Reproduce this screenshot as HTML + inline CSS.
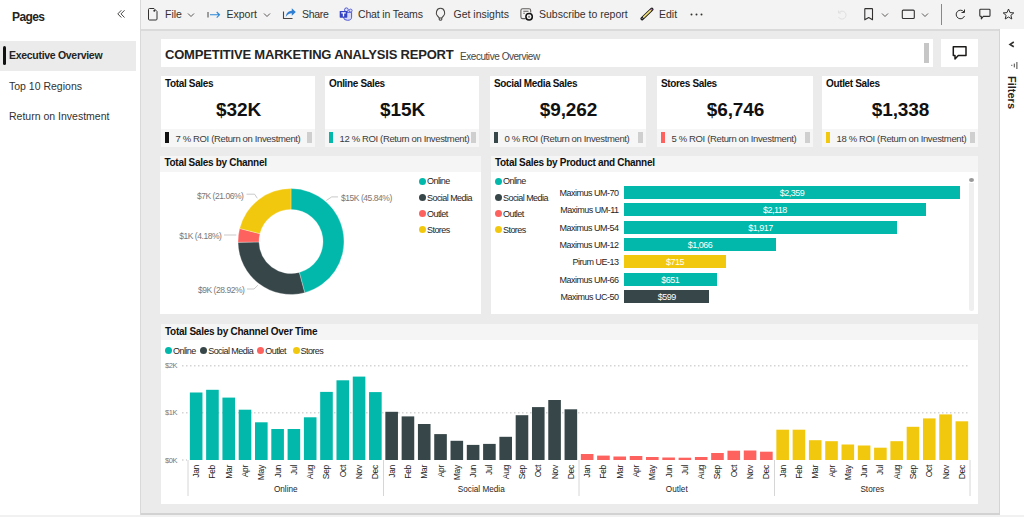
<!DOCTYPE html>
<html><head><meta charset="utf-8">
<style>
*{margin:0;padding:0;box-sizing:border-box}
html,body{width:1024px;height:517px;overflow:hidden;background:#fff;font-family:"Liberation Sans",sans-serif;color:#252423}
.a{position:absolute}
.t{white-space:nowrap;position:absolute;line-height:1}
svg{position:absolute;overflow:visible}
</style></head><body>

<div class="a" style="left:140px;top:0px;width:1px;height:517px;background:#d9d9d9;"></div>
<div class="t" style="left:12.00px;top:11.14px;font-size:12px;font-weight:bold;color:#252423;letter-spacing:-0.6px;">Pages</div>
<svg style="left:0;top:0" width="140" height="40"><path d="M121.3,10.3 L117.8,13.9 L121.3,17.5 M124.5,10.3 L121,13.9 L124.5,17.5" fill="none" stroke="#484644" stroke-width="1"/></svg>
<div class="a" style="left:0px;top:41px;width:136px;height:30px;background:#ebebeb;"></div>
<div class="a" style="left:3px;top:46px;width:3px;height:19px;background:#111;border-radius:1.5px"></div>
<div class="t" style="left:9.00px;top:50.01px;font-size:10.5px;font-weight:bold;color:#252423;letter-spacing:-0.3px;">Executive Overview</div>
<div class="t" style="left:9.00px;top:80.71px;font-size:10.5px;font-weight:normal;color:#323130;">Top 10 Regions</div>
<div class="t" style="left:9.00px;top:110.81px;font-size:10.5px;font-weight:normal;color:#323130;">Return on Investment</div>
<div class="a" style="left:141px;top:0px;width:883px;height:29px;background:#f3f3f3;"></div>
<div class="a" style="left:141px;top:29px;width:859px;height:2px;background:#dadada;"></div>
<svg style="left:0;top:0" width="1024" height="30"><path d="M149.5,8.5 H154 L157,11.5 V19 Q157,20 156,20 H149.5 Q148.5,20 148.5,19 V9.5 Q148.5,8.5 149.5,8.5 Z" fill="none" stroke="#323130" stroke-width="1"/><circle cx="154.3" cy="10.8" r="1" fill="#323130"/><path d="M188,13.5 L191,16.5 L194,13.5" fill="none" stroke="#484644" stroke-width="0.9"/><path d="M264,13.5 L267,16.5 L270,13.5" fill="none" stroke="#484644" stroke-width="0.9"/><path d="M208,12 V17.5" stroke="#484644" stroke-width="1"/><path d="M210,14.8 H219.5 M216.7,12 L219.5,14.8 L216.7,17.6" fill="none" stroke="#2b88d8" stroke-width="1.1"/><path d="M283.5,11.5 V18.5 H292.5" fill="none" stroke="#484644" stroke-width="1.1"/><path d="M285.8,17 C286,13.2 288.6,11 291.8,10.8 V8.3 L295.8,12 L291.8,15.7 V13.3 C289.3,13.3 287.3,14.6 285.8,17 Z" fill="#2f7fd4"/><circle cx="350.6" cy="10.6" r="1.5" fill="#dfe1fa" stroke="#5a63d6" stroke-width="1"/><path d="M343.5,12.3 H351.6 V17.2 Q351.6,20.3 347.5,20.3 Q343.5,20.3 343.5,17.2 Z" fill="#d6d8f7" stroke="#4f59d3" stroke-width="1"/><circle cx="346.4" cy="9.8" r="1.9" fill="#dfe1fa" stroke="#4f59d3" stroke-width="1"/><rect x="339.7" y="10.9" width="7.6" height="6.8" rx="0.6" fill="#3443c4"/><path d="M341.3,12.9 H345.7 M343.5,12.9 V16.4" stroke="#fff" stroke-width="1.3"/><path d="M437.3,15.6 C435.6,14 436,8.3 440.5,8.3 C445,8.3 445.4,14 443.7,15.6 L441.8,17.8 V19.4 Q441.6,20.2 440.5,20.2 Q439.4,20.2 439.2,19.4 V17.8 Z M439.3,18 H441.7" fill="none" stroke="#484644" stroke-width="1.1" stroke-linejoin="round"/><path d="M525.5,18.6 H522.6 Q520.9,18.6 520.9,16.9 V10.4 Q520.9,8.7 522.6,8.7 H529 Q530.7,8.7 530.7,10.4 V12.5 M523.3,11.3 H528.5 M523.3,13.3 H524.8" fill="none" stroke="#605e5c" stroke-width="1.1"/><circle cx="529.1" cy="16.8" r="3.2" fill="#f3f3f3" stroke="#111" stroke-width="1.5"/><circle cx="529.1" cy="16.8" r="1.1" fill="#888"/><path d="M642,18.7 L651.9,9.3" stroke="#1f1f1f" stroke-width="3.3" stroke-linecap="round"/><path d="M643.6,17.1 L650.4,10.6" stroke="#f7e57a" stroke-width="1.5" stroke-linecap="round"/><circle cx="651.5" cy="9.7" r="0.9" fill="#c86dd7"/><circle cx="642.2" cy="18.5" r="0.6" fill="#aaa"/><circle cx="691.5" cy="14.5" r="1" fill="#323130"/><circle cx="696.5" cy="14.5" r="1" fill="#323130"/><circle cx="701.5" cy="14.5" r="1" fill="#323130"/><path d="M839,12.5 A4,4 0 1 1 838.5,17 M838.5,10.5 V13 H841" fill="none" stroke="#e0e0e0" stroke-width="1"/><path d="M865.3,8.6 H872 Q872.5,8.6 872.5,9.1 V19.8 L868.7,17.6 L864.8,19.8 V9.1 Q864.8,8.6 865.3,8.6 Z" fill="none" stroke="#323130" stroke-width="1.1" stroke-linejoin="round"/><path d="M882,13.5 L885,16.5 L888,13.5" fill="none" stroke="#484644" stroke-width="0.9"/><rect x="902.3" y="10.1" width="12" height="8.4" rx="1" fill="none" stroke="#323130" stroke-width="1.1"/><path d="M922,13.5 L925,16.5 L928,13.5" fill="none" stroke="#484644" stroke-width="0.9"/><path d="M941.5,4 V25" stroke="#8a8886" stroke-width="1"/><path d="M964,12 A4.3,4.3 0 1 0 964.5,16 M964.5,9.5 V12.5 H961.5" fill="none" stroke="#323130" stroke-width="1"/><path d="M980.6,9.3 H989.2 Q990,9.3 990,10.1 V15.6 Q990,16.4 989.2,16.4 H983.3 L981.3,18.8 V16.4 H980.6 Q979.8,16.4 979.8,15.6 V10.1 Q979.8,9.3 980.6,9.3 Z" fill="none" stroke="#323130" stroke-width="1.1" stroke-linejoin="round"/><path d="M1008.5,9 L1010,12.6 L1013.8,12.9 L1010.9,15.3 L1011.8,19 L1008.5,17 L1005.2,19 L1006.1,15.3 L1003.2,12.9 L1007,12.6 Z" fill="none" stroke="#323130" stroke-width="1" stroke-linejoin="round"/></svg>
<div class="t" style="left:165.00px;top:9.11px;font-size:10.5px;font-weight:normal;color:#323130;">File</div>
<div class="t" style="left:226.50px;top:9.11px;font-size:10.5px;font-weight:normal;color:#323130;">Export</div>
<div class="t" style="left:302.00px;top:9.11px;font-size:10.5px;font-weight:normal;color:#323130;letter-spacing:-0.3px;">Share</div>
<div class="t" style="left:358.00px;top:9.31px;font-size:10.5px;font-weight:normal;color:#323130;letter-spacing:-0.17px;">Chat in Teams</div>
<div class="t" style="left:453.50px;top:9.11px;font-size:10.5px;font-weight:normal;color:#323130;">Get insights</div>
<div class="t" style="left:539.00px;top:9.11px;font-size:10.5px;font-weight:normal;color:#323130;">Subscribe to report</div>
<div class="t" style="left:659.00px;top:9.11px;font-size:10.5px;font-weight:normal;color:#323130;">Edit</div>
<div class="a" style="left:141px;top:31px;width:858px;height:483px;background:#ebebeb;"></div>
<div class="a" style="left:999px;top:29px;width:1px;height:486px;background:#d4d4d4;"></div>
<div class="a" style="left:0px;top:515px;width:1024px;height:2px;background:#f1f1f1;"></div>
<div class="a" style="left:141px;top:513px;width:859px;height:2px;background:#d2d2d2;"></div>
<div class="a" style="left:161px;top:39px;width:772px;height:28px;background:#fff;"></div>
<div class="t" style="left:165.00px;top:48.40px;font-size:13px;font-weight:bold;color:#252423;letter-spacing:-0.2px;">COMPETITIVE MARKETING ANALYSIS REPORT</div>
<div class="t" style="left:460.00px;top:51.53px;font-size:10px;font-weight:normal;color:#484644;letter-spacing:-0.45px;">Executive Overview</div>
<div class="a" style="left:924px;top:43px;width:5px;height:20px;background:#c6c6c6;"></div>
<div class="a" style="left:941px;top:39px;width:37px;height:28px;background:#fff;"></div>
<svg style="left:0;top:0" width="1024" height="80"><path d="M953.3,46.8 H966 V55.4 H958.3 L955,59 L955,55.4 H953.3 Z" fill="none" stroke="#1b1a19" stroke-width="1.5" stroke-linejoin="round"/></svg>
<div class="a" style="left:161px;top:76px;width:154px;height:71px;background:#fff;"></div>
<div class="a" style="left:161px;top:129px;width:154px;height:18px;background:#f6f6f6;"></div>
<div class="t" style="left:165.00px;top:78.53px;font-size:10px;font-weight:bold;color:#111;letter-spacing:-0.35px;">Total Sales</div>
<div class="t" style="left:138.50px;top:99.72px;width:200px;text-align:center;font-size:19px;font-weight:bold;color:#111;letter-spacing:-0.1px;">$32K</div>
<div class="a" style="left:165px;top:132px;width:4px;height:11px;background:#111;"></div>
<div class="a" style="left:307px;top:132px;width:5px;height:11px;background:#cfcfcf;"></div>
<div class="t" style="left:175.50px;top:133.66px;font-size:9.5px;font-weight:normal;color:#3b3b3b;letter-spacing:-0.36px;">7 % ROI (Return on Investment)</div>
<div class="a" style="left:325px;top:76px;width:154px;height:71px;background:#fff;"></div>
<div class="a" style="left:325px;top:129px;width:154px;height:18px;background:#f6f6f6;"></div>
<div class="t" style="left:329.00px;top:78.53px;font-size:10px;font-weight:bold;color:#111;letter-spacing:-0.35px;">Online Sales</div>
<div class="t" style="left:302.50px;top:99.72px;width:200px;text-align:center;font-size:19px;font-weight:bold;color:#111;letter-spacing:-0.1px;">$15K</div>
<div class="a" style="left:329px;top:132px;width:4px;height:11px;background:#01b8aa;"></div>
<div class="a" style="left:471px;top:132px;width:5px;height:11px;background:#cfcfcf;"></div>
<div class="t" style="left:339.50px;top:133.66px;font-size:9.5px;font-weight:normal;color:#3b3b3b;letter-spacing:-0.36px;">12 % ROI (Return on Investment)</div>
<div class="a" style="left:490px;top:76px;width:156px;height:71px;background:#fff;"></div>
<div class="a" style="left:490px;top:129px;width:156px;height:18px;background:#f6f6f6;"></div>
<div class="t" style="left:494.00px;top:78.53px;font-size:10px;font-weight:bold;color:#111;letter-spacing:-0.35px;">Social Media Sales</div>
<div class="t" style="left:468.50px;top:99.72px;width:200px;text-align:center;font-size:19px;font-weight:bold;color:#111;letter-spacing:-0.1px;">$9,262</div>
<div class="a" style="left:494px;top:132px;width:4px;height:11px;background:#374649;"></div>
<div class="a" style="left:638px;top:132px;width:5px;height:11px;background:#cfcfcf;"></div>
<div class="t" style="left:504.50px;top:133.66px;font-size:9.5px;font-weight:normal;color:#3b3b3b;letter-spacing:-0.36px;">0 % ROI (Return on Investment)</div>
<div class="a" style="left:657px;top:76px;width:156px;height:71px;background:#fff;"></div>
<div class="a" style="left:657px;top:129px;width:156px;height:18px;background:#f6f6f6;"></div>
<div class="t" style="left:661.00px;top:78.53px;font-size:10px;font-weight:bold;color:#111;letter-spacing:-0.35px;">Stores Sales</div>
<div class="t" style="left:635.50px;top:99.72px;width:200px;text-align:center;font-size:19px;font-weight:bold;color:#111;letter-spacing:-0.1px;">$6,746</div>
<div class="a" style="left:661px;top:132px;width:4px;height:11px;background:#fd625e;"></div>
<div class="a" style="left:805px;top:132px;width:5px;height:11px;background:#cfcfcf;"></div>
<div class="t" style="left:671.50px;top:133.66px;font-size:9.5px;font-weight:normal;color:#3b3b3b;letter-spacing:-0.36px;">5 % ROI (Return on Investment)</div>
<div class="a" style="left:822px;top:76px;width:156px;height:71px;background:#fff;"></div>
<div class="a" style="left:822px;top:129px;width:156px;height:18px;background:#f6f6f6;"></div>
<div class="t" style="left:826.00px;top:78.53px;font-size:10px;font-weight:bold;color:#111;letter-spacing:-0.35px;">Outlet Sales</div>
<div class="t" style="left:800.50px;top:99.72px;width:200px;text-align:center;font-size:19px;font-weight:bold;color:#111;letter-spacing:-0.1px;">$1,338</div>
<div class="a" style="left:826px;top:132px;width:4px;height:11px;background:#f2c80f;"></div>
<div class="a" style="left:970px;top:132px;width:5px;height:11px;background:#cfcfcf;"></div>
<div class="t" style="left:836.50px;top:133.66px;font-size:9.5px;font-weight:normal;color:#3b3b3b;letter-spacing:-0.36px;">18 % ROI (Return on Investment)</div>
<div class="a" style="left:160px;top:156px;width:321px;height:158px;background:#fff;"></div>
<div class="a" style="left:160px;top:156px;width:321px;height:16px;background:#f5f5f5;"></div>
<div class="t" style="left:164.50px;top:158.34px;font-size:10px;font-weight:bold;color:#111;letter-spacing:-0.3px;">Total Sales by Channel</div>
<svg style="left:0;top:0" width="1024" height="517"><path d="M291.00,188.50 A53,53 0 0 1 304.70,292.70 L299.27,272.41 A32,32 0 0 0 291.00,209.50 Z" fill="#01b8aa" stroke="#fff" stroke-width="0.3"/><path d="M304.70,292.70 A53,53 0 0 1 238.01,242.30 L259.00,241.98 A32,32 0 0 0 299.27,272.41 Z" fill="#374649" stroke="#fff" stroke-width="0.3"/><path d="M238.01,242.30 A53,53 0 0 1 239.62,228.51 L259.98,233.66 A32,32 0 0 0 259.00,241.98 Z" fill="#fd625e" stroke="#fff" stroke-width="0.3"/><path d="M239.62,228.51 A53,53 0 0 1 291.00,188.50 L291.00,209.50 A32,32 0 0 0 259.98,233.66 Z" fill="#f2c80f" stroke="#fff" stroke-width="0.3"/><path d="M326.3,200.5 L331.7,196.9 H338" fill="none" stroke="#bbb" stroke-width="0.8"/><path d="M246.5,194.2 H254.6 L257.3,198.3" fill="none" stroke="#bbb" stroke-width="0.8"/><path d="M224,235 H236.3" fill="none" stroke="#bbb" stroke-width="0.8"/><path d="M247,289 H254 L257.9,285.2" fill="none" stroke="#bbb" stroke-width="0.8"/></svg>
<div class="t" style="left:341.00px;top:194.00px;font-size:8.5px;font-weight:normal;color:#777;letter-spacing:-0.45px;">$15K (45.84%)</div>
<div class="t" style="left:43.50px;top:191.50px;width:200px;text-align:right;font-size:8.5px;font-weight:normal;color:#777;letter-spacing:-0.45px;">$7K (21.06%)</div>
<div class="t" style="left:21.50px;top:231.70px;width:200px;text-align:right;font-size:8.5px;font-weight:normal;color:#777;letter-spacing:-0.45px;">$1K (4.18%)</div>
<div class="t" style="left:44.50px;top:285.50px;width:200px;text-align:right;font-size:8.5px;font-weight:normal;color:#777;letter-spacing:-0.45px;">$9K (28.92%)</div>
<div class="a" style="left:418.5px;top:177.5px;width:7px;height:7px;border-radius:50%;background:#01b8aa"></div>
<div class="t" style="left:427.00px;top:177.38px;font-size:9px;font-weight:normal;color:#252525;letter-spacing:-0.55px;">Online</div>
<div class="a" style="left:418.5px;top:193.7px;width:7px;height:7px;border-radius:50%;background:#374649"></div>
<div class="t" style="left:427.00px;top:193.58px;font-size:9px;font-weight:normal;color:#252525;letter-spacing:-0.55px;">Social Media</div>
<div class="a" style="left:418.5px;top:209.9px;width:7px;height:7px;border-radius:50%;background:#fd625e"></div>
<div class="t" style="left:427.00px;top:209.78px;font-size:9px;font-weight:normal;color:#252525;letter-spacing:-0.55px;">Outlet</div>
<div class="a" style="left:418.5px;top:226.1px;width:7px;height:7px;border-radius:50%;background:#f2c80f"></div>
<div class="t" style="left:427.00px;top:225.98px;font-size:9px;font-weight:normal;color:#252525;letter-spacing:-0.55px;">Stores</div>
<div class="a" style="left:491px;top:156px;width:487px;height:158px;background:#fff;"></div>
<div class="a" style="left:491px;top:156px;width:487px;height:16px;background:#f5f5f5;"></div>
<div class="t" style="left:495.00px;top:158.44px;font-size:10px;font-weight:bold;color:#111;letter-spacing:-0.3px;">Total Sales by Product and Channel</div>
<div class="a" style="left:495px;top:177.5px;width:7px;height:7px;border-radius:50%;background:#01b8aa"></div>
<div class="t" style="left:503.00px;top:177.38px;font-size:9px;font-weight:normal;color:#252525;letter-spacing:-0.55px;">Online</div>
<div class="a" style="left:495px;top:193.7px;width:7px;height:7px;border-radius:50%;background:#374649"></div>
<div class="t" style="left:503.00px;top:193.58px;font-size:9px;font-weight:normal;color:#252525;letter-spacing:-0.55px;">Social Media</div>
<div class="a" style="left:495px;top:209.9px;width:7px;height:7px;border-radius:50%;background:#fd625e"></div>
<div class="t" style="left:503.00px;top:209.78px;font-size:9px;font-weight:normal;color:#252525;letter-spacing:-0.55px;">Outlet</div>
<div class="a" style="left:495px;top:226.1px;width:7px;height:7px;border-radius:50%;background:#f2c80f"></div>
<div class="t" style="left:503.00px;top:225.98px;font-size:9px;font-weight:normal;color:#252525;letter-spacing:-0.55px;">Stores</div>
<div class="a" style="left:624px;top:186.0px;width:336.0px;height:13px;background:#01b8aa;"></div>
<div class="t" style="left:418.50px;top:189.08px;width:200px;text-align:right;font-size:9px;font-weight:normal;color:#252525;letter-spacing:-0.5px;">Maximus UM-70</div>
<div class="t" style="left:692.00px;top:189.08px;width:200px;text-align:center;font-size:9px;font-weight:normal;color:#fff;letter-spacing:-0.5px;">$2,359</div>
<div class="a" style="left:624px;top:203.3px;width:301.7px;height:13px;background:#01b8aa;"></div>
<div class="t" style="left:418.50px;top:206.38px;width:200px;text-align:right;font-size:9px;font-weight:normal;color:#252525;letter-spacing:-0.5px;">Maximus UM-11</div>
<div class="t" style="left:674.84px;top:206.38px;width:200px;text-align:center;font-size:9px;font-weight:normal;color:#fff;letter-spacing:-0.5px;">$2,118</div>
<div class="a" style="left:624px;top:220.6px;width:273.0px;height:13px;background:#01b8aa;"></div>
<div class="t" style="left:418.50px;top:223.68px;width:200px;text-align:right;font-size:9px;font-weight:normal;color:#252525;letter-spacing:-0.5px;">Maximus UM-54</div>
<div class="t" style="left:660.52px;top:223.68px;width:200px;text-align:center;font-size:9px;font-weight:normal;color:#fff;letter-spacing:-0.5px;">$1,917</div>
<div class="a" style="left:624px;top:237.9px;width:151.8px;height:13px;background:#01b8aa;"></div>
<div class="t" style="left:418.50px;top:240.98px;width:200px;text-align:right;font-size:9px;font-weight:normal;color:#252525;letter-spacing:-0.5px;">Maximus UM-12</div>
<div class="t" style="left:599.92px;top:240.98px;width:200px;text-align:center;font-size:9px;font-weight:normal;color:#fff;letter-spacing:-0.5px;">$1,066</div>
<div class="a" style="left:624px;top:255.2px;width:101.8px;height:13px;background:#f2c80f;"></div>
<div class="t" style="left:418.50px;top:258.28px;width:200px;text-align:right;font-size:9px;font-weight:normal;color:#252525;letter-spacing:-0.5px;">Pirum UE-13</div>
<div class="t" style="left:574.92px;top:258.28px;width:200px;text-align:center;font-size:9px;font-weight:normal;color:#fff;letter-spacing:-0.5px;">$715</div>
<div class="a" style="left:624px;top:272.5px;width:92.7px;height:13px;background:#01b8aa;"></div>
<div class="t" style="left:418.50px;top:275.58px;width:200px;text-align:right;font-size:9px;font-weight:normal;color:#252525;letter-spacing:-0.5px;">Maximus UM-66</div>
<div class="t" style="left:570.36px;top:275.58px;width:200px;text-align:center;font-size:9px;font-weight:normal;color:#fff;letter-spacing:-0.5px;">$651</div>
<div class="a" style="left:624px;top:289.8px;width:85.3px;height:13px;background:#374649;"></div>
<div class="t" style="left:418.50px;top:292.88px;width:200px;text-align:right;font-size:9px;font-weight:normal;color:#252525;letter-spacing:-0.5px;">Maximus UC-50</div>
<div class="t" style="left:566.66px;top:292.88px;width:200px;text-align:center;font-size:9px;font-weight:normal;color:#fff;letter-spacing:-0.5px;">$599</div>
<div class="a" style="left:969px;top:183px;width:5px;height:127.5px;background:#efefef;border-radius:0 0 2.5px 2.5px"></div>
<div class="a" style="left:969.2px;top:178.3px;width:5px;height:4px;border-radius:50%;background:#999"></div>
<div class="a" style="left:161px;top:324px;width:817px;height:180px;background:#fff;"></div>
<div class="a" style="left:161px;top:324px;width:817px;height:16px;background:#f5f5f5;"></div>
<div class="t" style="left:165.00px;top:326.84px;font-size:10px;font-weight:bold;color:#111;letter-spacing:-0.25px;">Total Sales by Channel Over Time</div>
<div class="a" style="left:165px;top:347.3px;width:7px;height:7px;border-radius:50%;background:#01b8aa"></div>
<div class="t" style="left:173.00px;top:347.08px;font-size:9px;font-weight:normal;color:#252525;letter-spacing:-0.55px;">Online</div>
<div class="a" style="left:200.2px;top:347.3px;width:7px;height:7px;border-radius:50%;background:#374649"></div>
<div class="t" style="left:208.20px;top:347.08px;font-size:9px;font-weight:normal;color:#252525;letter-spacing:-0.55px;">Social Media</div>
<div class="a" style="left:257.3px;top:347.3px;width:7px;height:7px;border-radius:50%;background:#fd625e"></div>
<div class="t" style="left:265.30px;top:347.08px;font-size:9px;font-weight:normal;color:#252525;letter-spacing:-0.55px;">Outlet</div>
<div class="a" style="left:292.5px;top:347.3px;width:7px;height:7px;border-radius:50%;background:#f2c80f"></div>
<div class="t" style="left:300.50px;top:347.08px;font-size:9px;font-weight:normal;color:#252525;letter-spacing:-0.55px;">Stores</div>
<div class="t" style="left:165.00px;top:362.05px;font-size:7.5px;font-weight:normal;color:#777;letter-spacing:-0.4px;">$2K</div>
<div class="t" style="left:165.00px;top:409.35px;font-size:7.5px;font-weight:normal;color:#777;letter-spacing:-0.4px;">$1K</div>
<div class="t" style="left:165.00px;top:456.85px;font-size:7.5px;font-weight:normal;color:#777;letter-spacing:-0.4px;">$0K</div>
<svg style="left:0;top:0" width="1024" height="517"><path d="M182,365.8 H970" stroke="#d4d4d4" stroke-width="1.5" stroke-dasharray="1.5,2.5"/><path d="M182,412.8 H970" stroke="#d4d4d4" stroke-width="1.5" stroke-dasharray="1.5,2.5"/><path d="M182,460 H187" stroke="#d4d4d4" stroke-width="1.5" stroke-dasharray="1.5,2.5"/><rect x="189.85" y="392.50" width="12.6" height="67.50" fill="#01b8aa"/><rect x="206.14" y="389.80" width="12.6" height="70.20" fill="#01b8aa"/><rect x="222.43" y="397.60" width="12.6" height="62.40" fill="#01b8aa"/><rect x="238.72" y="409.70" width="12.6" height="50.30" fill="#01b8aa"/><rect x="255.02" y="422.30" width="12.6" height="37.70" fill="#01b8aa"/><rect x="271.31" y="429.00" width="12.6" height="31.00" fill="#01b8aa"/><rect x="287.60" y="429.00" width="12.6" height="31.00" fill="#01b8aa"/><rect x="303.89" y="417.30" width="12.6" height="42.70" fill="#01b8aa"/><rect x="320.18" y="391.90" width="12.6" height="68.10" fill="#01b8aa"/><rect x="336.48" y="380.30" width="12.6" height="79.70" fill="#01b8aa"/><rect x="352.77" y="376.60" width="12.6" height="83.40" fill="#01b8aa"/><rect x="369.06" y="392.10" width="12.6" height="67.90" fill="#01b8aa"/><rect x="385.35" y="411.80" width="12.6" height="48.20" fill="#374649"/><rect x="401.64" y="416.40" width="12.6" height="43.60" fill="#374649"/><rect x="417.93" y="424.00" width="12.6" height="36.00" fill="#374649"/><rect x="434.23" y="434.10" width="12.6" height="25.90" fill="#374649"/><rect x="450.52" y="440.80" width="12.6" height="19.20" fill="#374649"/><rect x="466.81" y="444.90" width="12.6" height="15.10" fill="#374649"/><rect x="483.10" y="443.90" width="12.6" height="16.10" fill="#374649"/><rect x="499.39" y="436.80" width="12.6" height="23.20" fill="#374649"/><rect x="515.68" y="415.20" width="12.6" height="44.80" fill="#374649"/><rect x="531.98" y="407.10" width="12.6" height="52.90" fill="#374649"/><rect x="548.27" y="400.00" width="12.6" height="60.00" fill="#374649"/><rect x="564.56" y="409.30" width="12.6" height="50.70" fill="#374649"/><rect x="580.85" y="454.00" width="12.6" height="6.00" fill="#fd625e"/><rect x="597.14" y="455.60" width="12.6" height="4.40" fill="#fd625e"/><rect x="613.43" y="456.50" width="12.6" height="3.50" fill="#fd625e"/><rect x="629.73" y="456.00" width="12.6" height="4.00" fill="#fd625e"/><rect x="646.02" y="457.00" width="12.6" height="3.00" fill="#fd625e"/><rect x="662.31" y="457.50" width="12.6" height="2.50" fill="#fd625e"/><rect x="678.60" y="457.70" width="12.6" height="2.30" fill="#fd625e"/><rect x="694.89" y="457.00" width="12.6" height="3.00" fill="#fd625e"/><rect x="711.18" y="453.00" width="12.6" height="7.00" fill="#fd625e"/><rect x="727.48" y="450.70" width="12.6" height="9.30" fill="#fd625e"/><rect x="743.77" y="450.50" width="12.6" height="9.50" fill="#fd625e"/><rect x="760.06" y="451.70" width="12.6" height="8.30" fill="#fd625e"/><rect x="776.35" y="429.70" width="12.6" height="30.30" fill="#f2c80f"/><rect x="792.64" y="429.70" width="12.6" height="30.30" fill="#f2c80f"/><rect x="808.93" y="440.20" width="12.6" height="19.80" fill="#f2c80f"/><rect x="825.23" y="441.20" width="12.6" height="18.80" fill="#f2c80f"/><rect x="841.52" y="444.50" width="12.6" height="15.50" fill="#f2c80f"/><rect x="857.81" y="445.50" width="12.6" height="14.50" fill="#f2c80f"/><rect x="874.10" y="447.70" width="12.6" height="12.30" fill="#f2c80f"/><rect x="890.39" y="441.20" width="12.6" height="18.80" fill="#f2c80f"/><rect x="906.68" y="426.80" width="12.6" height="33.20" fill="#f2c80f"/><rect x="922.98" y="418.40" width="12.6" height="41.60" fill="#f2c80f"/><rect x="939.27" y="414.40" width="12.6" height="45.60" fill="#f2c80f"/><rect x="955.56" y="421.30" width="12.6" height="38.70" fill="#f2c80f"/><path d="M188.00,460 V496" stroke="#d6d6d6" stroke-width="1"/><path d="M383.50,460 V496" stroke="#d6d6d6" stroke-width="1"/><path d="M579.00,460 V496" stroke="#d6d6d6" stroke-width="1"/><path d="M774.50,460 V496" stroke="#d6d6d6" stroke-width="1"/><path d="M970.00,460 V496" stroke="#d6d6d6" stroke-width="1"/></svg>
<div class="t" style="left:166.15px;top:465.00px;width:30px;height:8px;font-size:8.5px;letter-spacing:-0.3px;color:#252525;text-align:right;transform-origin:100% 0;transform:rotate(-90deg) translate(0,-4px)">Jan</div>
<div class="t" style="left:182.44px;top:465.00px;width:30px;height:8px;font-size:8.5px;letter-spacing:-0.3px;color:#252525;text-align:right;transform-origin:100% 0;transform:rotate(-90deg) translate(0,-4px)">Feb</div>
<div class="t" style="left:198.73px;top:465.00px;width:30px;height:8px;font-size:8.5px;letter-spacing:-0.3px;color:#252525;text-align:right;transform-origin:100% 0;transform:rotate(-90deg) translate(0,-4px)">Mar</div>
<div class="t" style="left:215.02px;top:465.00px;width:30px;height:8px;font-size:8.5px;letter-spacing:-0.3px;color:#252525;text-align:right;transform-origin:100% 0;transform:rotate(-90deg) translate(0,-4px)">Apr</div>
<div class="t" style="left:231.31px;top:465.00px;width:30px;height:8px;font-size:8.5px;letter-spacing:-0.3px;color:#252525;text-align:right;transform-origin:100% 0;transform:rotate(-90deg) translate(0,-4px)">May</div>
<div class="t" style="left:247.60px;top:465.00px;width:30px;height:8px;font-size:8.5px;letter-spacing:-0.3px;color:#252525;text-align:right;transform-origin:100% 0;transform:rotate(-90deg) translate(0,-4px)">Jun</div>
<div class="t" style="left:263.90px;top:465.00px;width:30px;height:8px;font-size:8.5px;letter-spacing:-0.3px;color:#252525;text-align:right;transform-origin:100% 0;transform:rotate(-90deg) translate(0,-4px)">Jul</div>
<div class="t" style="left:280.19px;top:465.00px;width:30px;height:8px;font-size:8.5px;letter-spacing:-0.3px;color:#252525;text-align:right;transform-origin:100% 0;transform:rotate(-90deg) translate(0,-4px)">Aug</div>
<div class="t" style="left:296.48px;top:465.00px;width:30px;height:8px;font-size:8.5px;letter-spacing:-0.3px;color:#252525;text-align:right;transform-origin:100% 0;transform:rotate(-90deg) translate(0,-4px)">Sep</div>
<div class="t" style="left:312.77px;top:465.00px;width:30px;height:8px;font-size:8.5px;letter-spacing:-0.3px;color:#252525;text-align:right;transform-origin:100% 0;transform:rotate(-90deg) translate(0,-4px)">Oct</div>
<div class="t" style="left:329.06px;top:465.00px;width:30px;height:8px;font-size:8.5px;letter-spacing:-0.3px;color:#252525;text-align:right;transform-origin:100% 0;transform:rotate(-90deg) translate(0,-4px)">Nov</div>
<div class="t" style="left:345.35px;top:465.00px;width:30px;height:8px;font-size:8.5px;letter-spacing:-0.3px;color:#252525;text-align:right;transform-origin:100% 0;transform:rotate(-90deg) translate(0,-4px)">Dec</div>
<div class="t" style="left:185.75px;top:486.36px;width:200px;text-align:center;font-size:8.2px;font-weight:normal;color:#252525;">Online</div>
<div class="t" style="left:361.65px;top:465.00px;width:30px;height:8px;font-size:8.5px;letter-spacing:-0.3px;color:#252525;text-align:right;transform-origin:100% 0;transform:rotate(-90deg) translate(0,-4px)">Jan</div>
<div class="t" style="left:377.94px;top:465.00px;width:30px;height:8px;font-size:8.5px;letter-spacing:-0.3px;color:#252525;text-align:right;transform-origin:100% 0;transform:rotate(-90deg) translate(0,-4px)">Feb</div>
<div class="t" style="left:394.23px;top:465.00px;width:30px;height:8px;font-size:8.5px;letter-spacing:-0.3px;color:#252525;text-align:right;transform-origin:100% 0;transform:rotate(-90deg) translate(0,-4px)">Mar</div>
<div class="t" style="left:410.52px;top:465.00px;width:30px;height:8px;font-size:8.5px;letter-spacing:-0.3px;color:#252525;text-align:right;transform-origin:100% 0;transform:rotate(-90deg) translate(0,-4px)">Apr</div>
<div class="t" style="left:426.81px;top:465.00px;width:30px;height:8px;font-size:8.5px;letter-spacing:-0.3px;color:#252525;text-align:right;transform-origin:100% 0;transform:rotate(-90deg) translate(0,-4px)">May</div>
<div class="t" style="left:443.10px;top:465.00px;width:30px;height:8px;font-size:8.5px;letter-spacing:-0.3px;color:#252525;text-align:right;transform-origin:100% 0;transform:rotate(-90deg) translate(0,-4px)">Jun</div>
<div class="t" style="left:459.40px;top:465.00px;width:30px;height:8px;font-size:8.5px;letter-spacing:-0.3px;color:#252525;text-align:right;transform-origin:100% 0;transform:rotate(-90deg) translate(0,-4px)">Jul</div>
<div class="t" style="left:475.69px;top:465.00px;width:30px;height:8px;font-size:8.5px;letter-spacing:-0.3px;color:#252525;text-align:right;transform-origin:100% 0;transform:rotate(-90deg) translate(0,-4px)">Aug</div>
<div class="t" style="left:491.98px;top:465.00px;width:30px;height:8px;font-size:8.5px;letter-spacing:-0.3px;color:#252525;text-align:right;transform-origin:100% 0;transform:rotate(-90deg) translate(0,-4px)">Sep</div>
<div class="t" style="left:508.27px;top:465.00px;width:30px;height:8px;font-size:8.5px;letter-spacing:-0.3px;color:#252525;text-align:right;transform-origin:100% 0;transform:rotate(-90deg) translate(0,-4px)">Oct</div>
<div class="t" style="left:524.56px;top:465.00px;width:30px;height:8px;font-size:8.5px;letter-spacing:-0.3px;color:#252525;text-align:right;transform-origin:100% 0;transform:rotate(-90deg) translate(0,-4px)">Nov</div>
<div class="t" style="left:540.85px;top:465.00px;width:30px;height:8px;font-size:8.5px;letter-spacing:-0.3px;color:#252525;text-align:right;transform-origin:100% 0;transform:rotate(-90deg) translate(0,-4px)">Dec</div>
<div class="t" style="left:381.25px;top:486.36px;width:200px;text-align:center;font-size:8.2px;font-weight:normal;color:#252525;">Social Media</div>
<div class="t" style="left:557.15px;top:465.00px;width:30px;height:8px;font-size:8.5px;letter-spacing:-0.3px;color:#252525;text-align:right;transform-origin:100% 0;transform:rotate(-90deg) translate(0,-4px)">Jan</div>
<div class="t" style="left:573.44px;top:465.00px;width:30px;height:8px;font-size:8.5px;letter-spacing:-0.3px;color:#252525;text-align:right;transform-origin:100% 0;transform:rotate(-90deg) translate(0,-4px)">Feb</div>
<div class="t" style="left:589.73px;top:465.00px;width:30px;height:8px;font-size:8.5px;letter-spacing:-0.3px;color:#252525;text-align:right;transform-origin:100% 0;transform:rotate(-90deg) translate(0,-4px)">Mar</div>
<div class="t" style="left:606.02px;top:465.00px;width:30px;height:8px;font-size:8.5px;letter-spacing:-0.3px;color:#252525;text-align:right;transform-origin:100% 0;transform:rotate(-90deg) translate(0,-4px)">Apr</div>
<div class="t" style="left:622.31px;top:465.00px;width:30px;height:8px;font-size:8.5px;letter-spacing:-0.3px;color:#252525;text-align:right;transform-origin:100% 0;transform:rotate(-90deg) translate(0,-4px)">May</div>
<div class="t" style="left:638.60px;top:465.00px;width:30px;height:8px;font-size:8.5px;letter-spacing:-0.3px;color:#252525;text-align:right;transform-origin:100% 0;transform:rotate(-90deg) translate(0,-4px)">Jun</div>
<div class="t" style="left:654.90px;top:465.00px;width:30px;height:8px;font-size:8.5px;letter-spacing:-0.3px;color:#252525;text-align:right;transform-origin:100% 0;transform:rotate(-90deg) translate(0,-4px)">Jul</div>
<div class="t" style="left:671.19px;top:465.00px;width:30px;height:8px;font-size:8.5px;letter-spacing:-0.3px;color:#252525;text-align:right;transform-origin:100% 0;transform:rotate(-90deg) translate(0,-4px)">Aug</div>
<div class="t" style="left:687.48px;top:465.00px;width:30px;height:8px;font-size:8.5px;letter-spacing:-0.3px;color:#252525;text-align:right;transform-origin:100% 0;transform:rotate(-90deg) translate(0,-4px)">Sep</div>
<div class="t" style="left:703.77px;top:465.00px;width:30px;height:8px;font-size:8.5px;letter-spacing:-0.3px;color:#252525;text-align:right;transform-origin:100% 0;transform:rotate(-90deg) translate(0,-4px)">Oct</div>
<div class="t" style="left:720.06px;top:465.00px;width:30px;height:8px;font-size:8.5px;letter-spacing:-0.3px;color:#252525;text-align:right;transform-origin:100% 0;transform:rotate(-90deg) translate(0,-4px)">Nov</div>
<div class="t" style="left:736.35px;top:465.00px;width:30px;height:8px;font-size:8.5px;letter-spacing:-0.3px;color:#252525;text-align:right;transform-origin:100% 0;transform:rotate(-90deg) translate(0,-4px)">Dec</div>
<div class="t" style="left:576.75px;top:486.36px;width:200px;text-align:center;font-size:8.2px;font-weight:normal;color:#252525;">Outlet</div>
<div class="t" style="left:752.65px;top:465.00px;width:30px;height:8px;font-size:8.5px;letter-spacing:-0.3px;color:#252525;text-align:right;transform-origin:100% 0;transform:rotate(-90deg) translate(0,-4px)">Jan</div>
<div class="t" style="left:768.94px;top:465.00px;width:30px;height:8px;font-size:8.5px;letter-spacing:-0.3px;color:#252525;text-align:right;transform-origin:100% 0;transform:rotate(-90deg) translate(0,-4px)">Feb</div>
<div class="t" style="left:785.23px;top:465.00px;width:30px;height:8px;font-size:8.5px;letter-spacing:-0.3px;color:#252525;text-align:right;transform-origin:100% 0;transform:rotate(-90deg) translate(0,-4px)">Mar</div>
<div class="t" style="left:801.52px;top:465.00px;width:30px;height:8px;font-size:8.5px;letter-spacing:-0.3px;color:#252525;text-align:right;transform-origin:100% 0;transform:rotate(-90deg) translate(0,-4px)">Apr</div>
<div class="t" style="left:817.81px;top:465.00px;width:30px;height:8px;font-size:8.5px;letter-spacing:-0.3px;color:#252525;text-align:right;transform-origin:100% 0;transform:rotate(-90deg) translate(0,-4px)">May</div>
<div class="t" style="left:834.10px;top:465.00px;width:30px;height:8px;font-size:8.5px;letter-spacing:-0.3px;color:#252525;text-align:right;transform-origin:100% 0;transform:rotate(-90deg) translate(0,-4px)">Jun</div>
<div class="t" style="left:850.40px;top:465.00px;width:30px;height:8px;font-size:8.5px;letter-spacing:-0.3px;color:#252525;text-align:right;transform-origin:100% 0;transform:rotate(-90deg) translate(0,-4px)">Jul</div>
<div class="t" style="left:866.69px;top:465.00px;width:30px;height:8px;font-size:8.5px;letter-spacing:-0.3px;color:#252525;text-align:right;transform-origin:100% 0;transform:rotate(-90deg) translate(0,-4px)">Aug</div>
<div class="t" style="left:882.98px;top:465.00px;width:30px;height:8px;font-size:8.5px;letter-spacing:-0.3px;color:#252525;text-align:right;transform-origin:100% 0;transform:rotate(-90deg) translate(0,-4px)">Sep</div>
<div class="t" style="left:899.27px;top:465.00px;width:30px;height:8px;font-size:8.5px;letter-spacing:-0.3px;color:#252525;text-align:right;transform-origin:100% 0;transform:rotate(-90deg) translate(0,-4px)">Oct</div>
<div class="t" style="left:915.56px;top:465.00px;width:30px;height:8px;font-size:8.5px;letter-spacing:-0.3px;color:#252525;text-align:right;transform-origin:100% 0;transform:rotate(-90deg) translate(0,-4px)">Nov</div>
<div class="t" style="left:931.85px;top:465.00px;width:30px;height:8px;font-size:8.5px;letter-spacing:-0.3px;color:#252525;text-align:right;transform-origin:100% 0;transform:rotate(-90deg) translate(0,-4px)">Dec</div>
<div class="t" style="left:772.25px;top:486.36px;width:200px;text-align:center;font-size:8.2px;font-weight:normal;color:#252525;">Stores</div>
<svg style="left:0;top:0" width="1024" height="120"><path d="M1013.8,42 L1010,44.4 L1013.8,46.8" fill="none" stroke="#323130" stroke-width="1.6"/><path d="M1016.9,62 V69 M1014.3,63.6 V67.4 M1011.8,64.8 V65.9" stroke="#484644" stroke-width="1"/></svg>
<div class="t" style="left:1017px;top:76px;font-size:11px;font-weight:bold;color:#252423;transform-origin:0 0;transform:rotate(90deg)">Filters</div>
</body></html>
